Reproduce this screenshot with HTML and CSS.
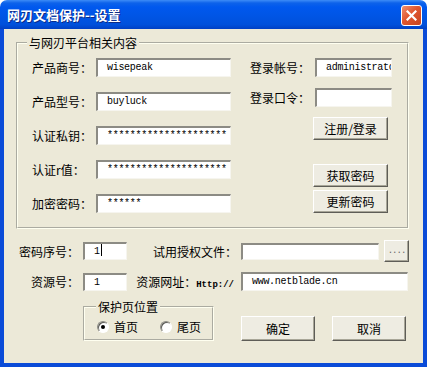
FILE: index.html
```html
<!DOCTYPE html>
<html lang="zh-CN">
<head>
  <meta charset="UTF-8">
  <title>网刃文档保护--设置</title>
  <link rel="stylesheet" href="styles.css">
</head>
<body>
  <div class="window">
    <div class="titlebar">
      <span class="title">网刃文档保护--设置</span>
      <span class="close-btn">
        <svg width="11" height="11" viewBox="0 0 11 11"><path d="M1.5 1.5 L9.5 9.5 M9.5 1.5 L1.5 9.5" stroke="#fff" stroke-width="2.2" stroke-linecap="square"/></svg>
      </span>
    </div>

    <div class="client">
      <fieldset class="group main-group">
        <legend>与网刃平台相关内容</legend>
        <div class="group-body">
          <div class="col-left">
            <div class="field"><span class="label">产品商号：</span><span class="edit wide">wisepeak</span></div>
            <div class="field"><span class="label">产品型号：</span><span class="edit wide">buyluck</span></div>
            <div class="field"><span class="label">认证私钥：</span><span class="edit wide">*********************</span></div>
            <div class="field"><span class="label">认证r值：</span><span class="edit wide">*********************</span></div>
            <div class="field"><span class="label">加密密码：</span><span class="edit wide">******</span></div>
          </div>
          <div class="col-right">
            <div class="field"><span class="label">登录帐号：</span><span class="edit narrow">administrator</span></div>
            <div class="field second"><span class="label">登录口令：</span><span class="edit narrow"></span></div>
            <button class="btn side-btn login-btn">注册/登录</button>
            <button class="btn side-btn get-btn">获取密码</button>
            <button class="btn side-btn">更新密码</button>
          </div>
        </div>
      </fieldset>

      <div class="bottom">
        <span class="label right">密码序号：</span>
        <span class="edit short">1<i class="caret"></i></span>
        <span class="label right">试用授权文件：</span>
        <div class="file-row">
          <span class="edit file"></span>
          <button class="btn browse">....</button>
        </div>

        <span class="label right">资源号：</span>
        <span class="edit short">1</span>
        <span class="label right url-label">资源网址：<span class="mono">Http://</span></span>
        <span class="edit url">www.netblade.cn</span>

        <fieldset class="group page-group">
          <legend>保护页位置</legend>
          <div class="radios">
            <span class="radio-item"><span class="radio checked"></span>首页</span>
            <span class="radio-item"><span class="radio"></span>尾页</span>
          </div>
        </fieldset>
        <div class="actions">
          <button class="btn action">确定</button>
          <button class="btn action">取消</button>
        </div>
      </div>
    </div>
  </div>
</body>
</html>
```

FILE: styles.css
```css
* {
  margin: 0;
  padding: 0;
  box-sizing: border-box;
}

body {
  background: #fff;
  font-family: "Noto Sans CJK SC", sans-serif;
  font-size: 12px;
  color: #000;
}

.window {
  width: 427px;
  height: 367px;
  display: flex;
  flex-direction: column;
}

.titlebar {
  height: 29px;
  display: flex;
  align-items: center;
  justify-content: space-between;
  padding: 0 5px 0 7px;
  border-radius: 7px 7px 0 0;
  background: linear-gradient(#3d8cf7 0, #0d62ea 3px, #0058ee 7px, #0055e5 55%, #0050db 85%, #0040c4 100%);
}

.title {
  color: #fff;
  font-weight: bold;
  font-size: 13px;
  line-height: 16px;
  text-shadow: 1px 1px #0b2a86;
}

.close-btn {
  width: 21px;
  height: 21px;
  margin-top: 1px;
  display: flex;
  align-items: center;
  justify-content: center;
  border: 1px solid #fff;
  border-radius: 3px;
  background: linear-gradient(135deg, #f09070, #e0562f 45%, #c8441f);
}

.client {
  flex: 1;
  background: #ece9d8;
  border: 4px solid #0a4bd8;
  border-top: none;
  padding: 7px 0 0 12px;
}

.group {
  border: 2px groove #fffff0;
}

.group legend {
  line-height: 14px;
  padding: 0 2px;
}

.main-group {
  width: 393px;
}

.main-group legend {
  margin-left: 9px;
}

.group-body {
  display: flex;
  gap: 19px;
  padding: 8px 0 14px 14px;
}

.col-left {
  display: flex;
  flex-direction: column;
  gap: 15px;
}

.col-right {
  display: flex;
  flex-direction: column;
  align-items: flex-start;
}

.field {
  display: flex;
  align-items: center;
}

.col-left .label {
  width: 64px;
}

.col-right .label {
  width: 65px;
}

.col-right .second {
  margin-top: 11px;
}

.edit {
  display: block;
  height: 19px;
  background: #fff;
  border-top: 2px solid #8c8b84;
  border-left: 2px solid #8c8b84;
  border-right: 1px solid #f6f5ef;
  border-bottom: 1px solid #f6f5ef;
  padding-left: 9px;
  font-family: "Liberation Mono", monospace;
  font-size: 10px;
  line-height: 16px;
  letter-spacing: -0.3px;
  white-space: nowrap;
  overflow: hidden;
}

.edit.wide {
  width: 135px;
}

.edit.narrow {
  width: 77px;
}

.btn {
  font-family: "Noto Sans CJK SC", sans-serif;
  font-size: 12px;
  color: #000;
  background: #eeece2;
  border: 1px solid;
  border-color: #fff #5e5d57 #5e5d57 #fff;
  box-shadow: inset -1px -1px #a8a698;
}

.side-btn {
  width: 75px;
  height: 23px;
  margin-left: 63px;
}

.login-btn {
  margin-top: 10px;
}

.get-btn {
  margin-top: 24px;
  margin-bottom: 3px;
}

.bottom {
  display: grid;
  grid-template-columns: 62px 44px 106px 168px;
  grid-template-rows: 22px 19px auto;
  column-gap: 4px;
  row-gap: 10px;
  align-items: center;
  margin-top: 11px;
  margin-left: 1px;
}

.label.right {
  text-align: right;
  white-space: nowrap;
}

.mono {
  font-family: "Liberation Mono", monospace;
  font-size: 9px;
  font-weight: bold;
}

.url-label {
  padding-right: 3px;
}

.edit.short {
  width: 44px;
  height: 18px;
}

.caret {
  display: inline-block;
  width: 1px;
  height: 12px;
  background: #000;
  vertical-align: -2px;
  margin-left: 1px;
}

.file-row {
  display: flex;
  align-items: center;
  gap: 5px;
}

.edit.file {
  width: 138px;
  height: 17px;
}

.browse {
  width: 25px;
  height: 22px;
  font-family: "Liberation Mono", monospace;
  font-size: 9px;
  color: #666;
  letter-spacing: -1px;
}

.edit.url {
  width: 167px;
  height: 19px;
}

.page-group {
  grid-column: 2 / 4;
  width: 131px;
  margin-top: -1px;
}

.page-group legend {
  margin-left: 11px;
}

.radios {
  display: flex;
  gap: 22px;
  padding: 5px 0 5px 12px;
}

.radio-item {
  display: flex;
  align-items: center;
  gap: 5px;
  line-height: 15px;
}

.radio {
  width: 12px;
  height: 12px;
  border-radius: 50%;
  background: #fff;
  border: 1px solid;
  border-color: #8c8b84 #fff #fff #8c8b84;
  box-shadow: inset 1px 1px #5a5a55;
  display: flex;
  align-items: center;
  justify-content: center;
}

.radio.checked::after {
  content: "";
  width: 4px;
  height: 4px;
  border-radius: 50%;
  background: #000;
}

.actions {
  display: flex;
  gap: 17px;
  align-self: end;
}

.action {
  width: 74px;
  height: 25px;
}
```
